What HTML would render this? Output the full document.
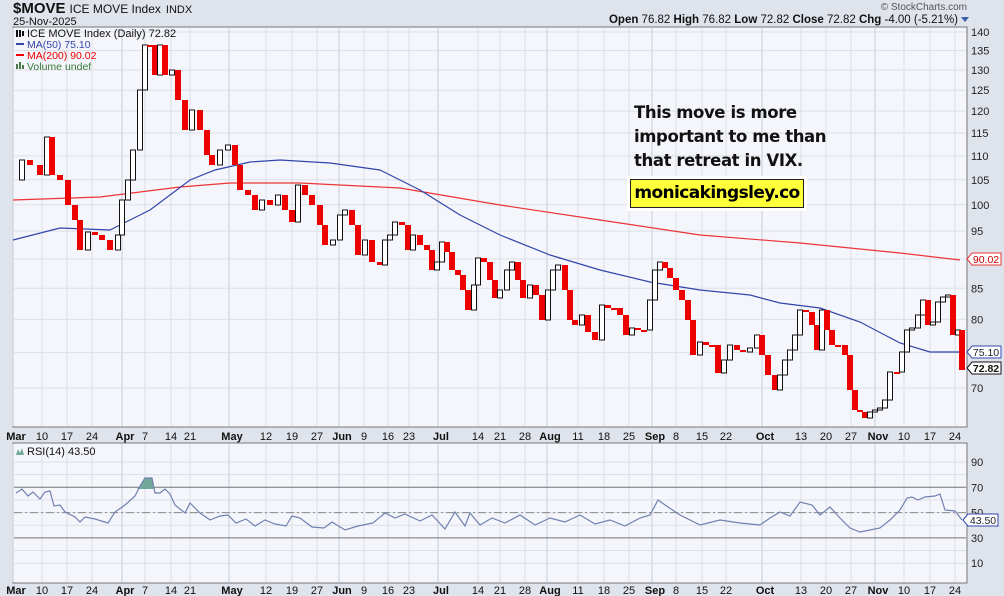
<!DOCTYPE html>
<html><head><meta charset="utf-8">
<style>
html,body{margin:0;padding:0;width:1004px;height:596px;overflow:hidden;background:#dfe3eb;font-family:"Liberation Sans",sans-serif;}
svg{position:absolute;left:0;top:0}
.note{position:absolute;left:634px;top:101px;font:bold 16.5px/24px "DejaVu Sans","Liberation Sans",sans-serif;color:#111;letter-spacing:-0.4px}
.box{position:absolute;left:627px;top:176px;width:180px;height:35px;background:#fff}
.box div{position:absolute;left:3px;top:3px;width:172px;height:27px;background:#ffff3a;border:1px solid #222;font:bold 17px/27px "DejaVu Sans",sans-serif;text-align:center;letter-spacing:-0.6px}
</style></head><body>
<svg id="s" width="1004" height="596" xmlns="http://www.w3.org/2000/svg"></svg>
<div class="note">This move is more<br>important to me than<br>that retreat in VIX.</div>
<div class="box"><div>monicakingsley.co</div></div>
<script>
var s=document.getElementById('s'),h='';
function L(x1,y1,x2,y2,c,w,d){h+='<line x1="'+x1+'" y1="'+y1+'" x2="'+x2+'" y2="'+y2+'" stroke="'+c+'" stroke-width="'+(w||1)+'"'+(d?' stroke-dasharray="'+d+'"':'')+'/>';}
function T(x,y,t,sz,c,b,a){h+='<text x="'+x+'" y="'+y+'" font-size="'+sz+'" fill="'+(c||'#222')+'"'+(b?' font-weight="bold"':'')+(a?' text-anchor="'+a+'"':'')+' font-family="Liberation Sans, sans-serif">'+t+'</text>';}
// header
h+='<text x="13" y="13" fill="#111" font-family="Liberation Sans, sans-serif"><tspan font-size="15" font-weight="bold">$MOVE</tspan><tspan font-size="12" dx="4">ICE MOVE Index</tspan><tspan font-size="11" dx="5">INDX</tspan></text>';
T(13,25,'25-Nov-2025',11,'#111');
T(967,10,'© StockCharts.com',10,'#555',0,'end');
h+='<text x="958" y="23" font-size="11.5" fill="#111" text-anchor="end" font-family="Liberation Sans, sans-serif"><tspan font-weight="bold">Open</tspan> 76.82  <tspan font-weight="bold">High</tspan> 76.82  <tspan font-weight="bold">Low</tspan> 72.82  <tspan font-weight="bold">Close</tspan> 72.82  <tspan font-weight="bold">Chg</tspan> -4.00 (-5.21%)</text>';
h+='<path d="M961 17 L969 17 L965 22Z" fill="#3a5fa8"/>';
// panels
h+='<rect x="13" y="27" width="954" height="400" fill="#f4f6fb" stroke="#777"/>';
h+='<rect x="13" y="443" width="954" height="140" fill="#f4f6fb" stroke="#777"/>';
var dates=[[16,'Mar',1],[42,'10'],[67,'17'],[92,'24'],[125,'Apr',1],[145,'7'],[171,'14'],[190,'21'],[232,'May',1],[266,'12'],[292,'19'],[317,'27'],[342,'Jun',1],[364,'9'],[388,'16'],[409,'23'],[441,'Jul',1],[478,'14'],[500,'21'],[525,'28'],[550,'Aug',1],[578,'11'],[604,'18'],[629,'25'],[655,'Sep',1],[676,'8'],[702,'15'],[726,'22'],[765,'Oct',1],[801,'13'],[826,'20'],[851,'27'],[878,'Nov',1],[904,'10'],[930,'17'],[955,'24']];
dates.forEach(function(d){var gx=d[2]?d[0]-3:d[0];
L(gx,28,gx,426,d[2]?'#c9ccd3':'#dcdfe6',1);L(gx,444,gx,582,d[2]?'#c9ccd3':'#dcdfe6',1);
T(d[0],440,d[1],11,'#111',d[2],'middle');T(d[0],594,d[1],11,'#111',d[2],'middle');});
function py(p){return 32+513.6*(Math.log(140)-Math.log(p));}
for(var p=70;p<=140;p+=5){var y=py(p);L(14,y,966,y,'#dcdfe6');T(971,y+4,p,11,'#222');}
function ry(v){return 462+(90-v)*1.265;}
[10,20,30,40,50,60,70,80,90].forEach(function(v){L(14,ry(v),966,ry(v),'#dcdfe6');});
[10,30,50,70,90].forEach(function(v){T(971,ry(v)+4,v,11,'#222');});
L(14,ry(70),966,ry(70),'#777');L(14,ry(30),966,ry(30),'#777');L(14,ry(50),966,ry(50),'#888',1,'8,3,2,3');
// candles
var P=[[16,180],[22,160],[30,165],[40,175],[47,137],[52,175],[60,180],[68,205],[75,220],[80,250],[88,232],[95,235],[102,240],[110,250],[118,235],[122,200],[128,180],[133,150],[140,90],[145,45],[150,45],[155,75],[160,45],[165,75],[172,70],[178,100],[185,130],[192,110],[200,130],[207,155],[212,165],[220,150],[228,145],[235,165],[240,190],[248,195],[255,210],[262,200],[270,205],[278,195],[285,210],[292,222],[298,185],[305,195],[312,205],[320,225],[325,245],[333,240],[340,215],[345,210],[352,225],[358,255],[365,240],[372,262],[380,265],[385,240],[390,235],[395,222],[402,225],[408,250],[413,235],[420,245],[427,250],[432,270],[437,262],[442,242],[447,252],[452,270],[458,275],[463,290],[468,310],[474,285],[478,258],[484,262],[490,280],[495,298],[500,290],[507,270],[512,262],[518,280],[523,298],[530,285],[536,295],[542,320],[548,290],[553,270],[558,265],[565,290],[570,320],[575,325],[582,315],[588,332],[595,340],[602,305],[608,308],[614,308],[620,315],[626,335],[632,328],[638,330],[644,330],[650,300],[655,270],[660,262],[665,268],[670,278],[676,290],[682,300],[688,320],[693,355],[700,342],[706,345],[712,345],[718,373],[724,360],[730,345],[737,350],[743,352],[750,348],[757,335],[762,355],[768,375],[775,390],[780,375],[785,360],[790,350],[795,335],[800,310],[806,312],[812,325],[817,350],[822,310],[827,330],[832,345],[838,345],[845,355],[850,390],[855,410],[860,412],[865,418],[870,412],[875,410],[880,408],[885,400],[890,372],[897,372],[902,352],[907,330],[912,328],[918,315],[923,300],[928,325],[933,322],[938,302],[943,297],[948,295],[953,335],[958,330],[962,370]];
var bars='';
for(var i=1;i<P.length;i++){var a=P[i-1][1],b=P[i][1],x=P[i][0]-3,t=Math.min(a,b),hh=Math.max(Math.abs(a-b),2);
if(b<a)bars+='<rect x="'+(x+.5)+'" y="'+t+'" width="5" height="'+hh+'" fill="#fff" stroke="#111" stroke-width="1"/>';
else bars+='<rect x="'+x+'" y="'+t+'" width="6" height="'+hh+'" fill="#e00"/>';}
function pl(a,c,w){return '<polyline fill="none" stroke="'+c+'" stroke-width="'+w+'" points="'+a.map(function(q){return q.join(',')}).join(' ')+'"/>';}
h+=pl([[13,200],[100,197],[180,187],[230,183],[300,183],[400,188],[500,205],[600,220],[700,235],[800,243],[900,253],[960,260]],'#e33',1.2);
h+=pl([[13,240],[60,228],[110,230],[150,210],[190,180],[215,170],[250,162],[280,160],[330,163],[380,170],[420,190],[460,215],[500,235],[550,255],[600,270],[650,282],[700,290],[750,295],[780,303],[820,308],[860,322],[900,343],[930,352],[962,352]],'#3344aa',1.2);
h+=bars;
// legend
h+='<rect x="16" y="30" width="2" height="7" fill="#111"/><rect x="19" y="30" width="2" height="7" fill="#111"/><rect x="22" y="31" width="2" height="5" fill="#111"/>';
T(27,37,'ICE MOVE Index (Daily) 72.82',11,'#111');
L(16,44,24,44,'#3344aa',2);T(27,48,'MA(50) 75.10',10.5,'#3344aa');
L(16,55,24,55,'#e00',2);T(27,59,'MA(200) 90.02',10.5,'#e00');
h+='<rect x="16" y="64" width="2" height="5" fill="#4a7a4a"/><rect x="19" y="62" width="2" height="7" fill="#4a7a4a"/><rect x="22" y="65" width="2" height="4" fill="#4a7a4a"/>';
T(27,70,'Volume undef',10.5,'#3a7a3a');
// price tags
function tag(y,t,c,bold){h+='<path d="M967 '+y+' L972 '+(y-6)+' L1001 '+(y-6)+' L1001 '+(y+6)+' L972 '+(y+6)+'Z" fill="#fff" stroke="'+c+'"/>';T(986,y+4,t,10.5,bold?'#111':c==='#e33'?'#c00':'#223',bold,'middle');}
tag(259,'90.02','#e33');tag(352,'75.10','#3344aa');tag(368,'72.82','#111',1);
// RSI
var R=[[16,493],[22,489],[28,496],[33,492],[40,499],[45,492],[50,491],[54,506],[60,505],[65,512],[75,517],[80,522],[85,517],[95,519],[108,523],[115,512],[125,505],[135,496],[140,486],[145,478],[152,478],[155,493],[160,493],[165,489],[170,494],[175,505],[185,513],[190,503],[200,513],[210,520],[220,516],[228,515],[236,523],[246,519],[255,526],[265,520],[275,524],[286,526],[292,516],[300,518],[312,527],[324,528],[332,522],[345,530],[358,526],[373,523],[385,513],[395,518],[405,514],[420,521],[432,515],[445,529],[455,512],[465,526],[470,513],[480,525],[492,518],[505,523],[520,515],[535,525],[550,518],[565,522],[580,515],[595,524],[610,520],[625,526],[640,518],[650,515],[658,500],[668,507],[680,515],[700,525],[720,520],[740,523],[760,525],[770,518],[780,512],[790,516],[800,502],[812,505],[820,515],[830,507],[840,518],[850,528],[860,532],[870,530],[880,528],[890,520],[900,510],[907,498],[912,497],[918,500],[925,497],[935,496],[940,494],[945,510],[955,511],[962,520]];
h+='<path d="M137 489 L140 486 L145 478 L152 478 L154 489Z" fill="#6fa898"/>';
h+=pl(R,'#7080b0',1.2);
h+='<path d="M16 455 L18 449 L20 453 L22 448 L24 455Z" fill="#6fa898"/>';
T(27,455,'RSI(14) 43.50',11,'#111');
h+='<path d="M963 520 L968 514 L998 514 L998 526 L968 526Z" fill="#fff" stroke="#3344aa"/>';T(983,524,'43.50',10.5,'#223',0,'middle');
s.innerHTML=h;
</script>
</body></html>
